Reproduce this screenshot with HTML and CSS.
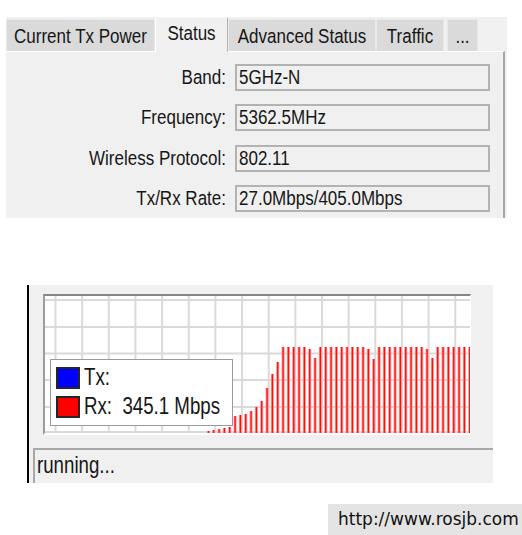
FILE: index.html
```html
<!DOCTYPE html>
<html>
<head>
<meta charset="utf-8">
<link rel="stylesheet" href="styles.css">
</head>
<body>
<div class="page">
  <section class="tabctl">
    <div class="tabs">
      <div class="tab w1"><span class="t">Current Tx Power</span></div>
      <div class="tab active w2"><span class="t">Status</span></div>
      <div class="tab w3"><span class="t">Advanced Status</span></div>
      <div class="tab w4"><span class="t">Traffic</span></div>
      <div class="tab w5"><span class="t">...</span></div>
    </div>
    <div class="pane">
      <div class="row"><div class="lbl"><span class="t">Band:</span></div><div class="fld"><span class="t">5GHz-N</span></div></div>
      <div class="row"><div class="lbl"><span class="t">Frequency:</span></div><div class="fld"><span class="t">5362.5MHz</span></div></div>
      <div class="row"><div class="lbl"><span class="t">Wireless Protocol:</span></div><div class="fld"><span class="t">802.11</span></div></div>
      <div class="row"><div class="lbl"><span class="t">Tx/Rx Rate:</span></div><div class="fld"><span class="t">27.0Mbps/405.0Mbps</span></div></div>
    </div>
  </section>

  <section class="graphwin">
    <div class="graph">
      <svg class="chart" width="425" height="137" viewBox="0 0 425 137">
        <path class="grid" d="M10.5 0V137M37.15 0V137M63.8 0V137M90.45 0V137M117.1 0V137M143.75 0V137M170.4 0V137M197.05 0V137M223.7 0V137M250.35 0V137M277 0V137M303.65 0V137M330.3 0V137M356.95 0V137M383.6 0V137M410.25 0V137M0 4H425M0 31H425M0 57.5H425M0 84H425M0 111H425M0 136H425"/>
        <path class="bars-halo" d="M163.4 135V137M168.7 134V137M174.1 133V137M179.4 132V137M184.7 131V137M190.1 120V137M195.4 119V137M200.7 118V137M206.1 115V137M211.4 111V137M216.7 105V137M222.1 92V137M227.4 78V137M232.7 66V137M238.1 51V137M243.4 51V137M248.7 51V137M254.1 51V137M259.4 51V137M264.7 53V137M270.1 62V137M275.4 51V137M280.7 51V137M286.1 51V137M291.4 51V137M296.7 51V137M302.1 51V137M307.4 51V137M312.7 51V137M318.1 51V137M323.4 53V137M328.7 63V137M334.1 51V137M339.4 51V137M344.7 51V137M350.1 51V137M355.4 51V137M360.7 51V137M366.1 51V137M371.4 51V137M376.7 51V137M382.1 53V137M387.4 62V137M392.7 51V137M398.1 51V137M403.4 51V137M408.7 51V137M414.1 51V137M419.4 51V137M424.7 51V137"/>
        <path class="bars" d="M163.4 135V137M168.7 134V137M174.1 133V137M179.4 132V137M184.7 131V137M190.1 120V137M195.4 119V137M200.7 118V137M206.1 115V137M211.4 111V137M216.7 105V137M222.1 92V137M227.4 78V137M232.7 66V137M238.1 51V137M243.4 51V137M248.7 51V137M254.1 51V137M259.4 51V137M264.7 53V137M270.1 62V137M275.4 51V137M280.7 51V137M286.1 51V137M291.4 51V137M296.7 51V137M302.1 51V137M307.4 51V137M312.7 51V137M318.1 51V137M323.4 53V137M328.7 63V137M334.1 51V137M339.4 51V137M344.7 51V137M350.1 51V137M355.4 51V137M360.7 51V137M366.1 51V137M371.4 51V137M376.7 51V137M382.1 53V137M387.4 62V137M392.7 51V137M398.1 51V137M403.4 51V137M408.7 51V137M414.1 51V137M419.4 51V137M424.7 51V137"/>
      </svg>
      <div class="legend">
        <div class="li"><span class="sw blue"></span><span class="t">Tx:</span></div>
        <div class="li"><span class="sw red"></span><span class="t">Rx:  345.1 Mbps</span></div>
      </div>
    </div>
    <div class="statusbar"><span class="t">running...</span></div>
  </section>

  <div class="wm">http://www.rosjb.com</div>
</div>
</body>
</html>
```

FILE: styles.css
```css
* { box-sizing: border-box; }

body {
  margin: 0;
  background: #ffffff;
  font-family: "Liberation Sans", Arial, sans-serif;
  color: #161616;
}

.page {
  width: 522px;
  height: 535px;
  overflow: hidden;
}

.t {
  display: inline-block;
  white-space: pre;
  transform: scaleY(1.24);
}

/* ---------- tab control ---------- */
.tabctl {
  margin: 17px 0 0 6px;
  width: 501px;
  height: 201px;
  background: #f0f0f0;
  display: flex;
  flex-direction: column;
}

.tabs {
  display: flex;
  align-items: flex-end;
  height: 34px;
  font-size: 17px;
}

.tab {
  height: 32px;
  background: #dadada;
  border: 1px solid #e9e9e9;
  border-bottom: none;
  display: flex;
  align-items: center;
  justify-content: center;
  padding-top: 2px;
  line-height: 1;
}

.tab.active {
  position: relative;
  z-index: 1;
  height: 35px;
  margin-bottom: -1px;
  background: #f0f0f0;
  border-left: 1px solid #ffffff;
  border-top: 1px solid #f6f6f6;
  border-right: 1px solid #b4b4b4;
  padding-top: 0;
  padding-bottom: 4px;
}

.w1 { width: 149px; }
.w2 { width: 73px; }
.w3 { width: 148px; }
.w4 { width: 68px; }
.w5 { width: 31px; margin-left: 3px; }

.pane {
  flex: 1;
  width: 499px;
  border-top: 1px solid #ffffff;
  border-right: 2px solid #a6a6a6;
  padding-top: 12px;
  display: flex;
  flex-direction: column;
  gap: 13.3px;
}

.row {
  display: flex;
  align-items: center;
  height: 27px;
  font-size: 17px;
  line-height: 1;
}

.lbl {
  width: 220px;
  text-align: right;
}

.fld {
  margin-left: 9px;
  width: 255px;
  height: 27px;
  border: 2px solid #b3b3b3;
  display: flex;
  align-items: center;
  padding-left: 2px;
}

/* ---------- graph window ---------- */
.graphwin {
  margin: 67px 0 0 27px;
  width: 466px;
  height: 198px;
  background: #f0f0f0;
  border-left: 2px solid #000000;
  padding: 9px 0 0 14px;
  display: flex;
  flex-direction: column;
}

.graph {
  position: relative;
  width: 428px;
  height: 141px;
  background: #ffffff;
  border-top: 2px solid #858585;
  border-left: 2px solid #9c9c9c;
  border-right: 1px solid #ffffff;
  border-bottom: 2px solid #ffffff;
}

.chart { display: block; }

.grid {
  fill: none;
  stroke: #dadada;
  stroke-width: 2;
}

.bars-halo {
  fill: none;
  stroke: #ff9494;
  stroke-width: 3;
}

.bars {
  fill: none;
  stroke: #ff1010;
  stroke-width: 1.3;
}

.legend {
  position: absolute;
  left: 5px;
  top: 63px;
  width: 183px;
  height: 67px;
  background: #ffffff;
  border: 1px solid #9a9a9a;
  padding: 7px 0 0 5px;
  display: flex;
  flex-direction: column;
  gap: 7px;
  font-size: 18.7px;
  line-height: 1;
}

.li {
  display: flex;
  align-items: center;
  height: 22px;
}

.li .t { margin-left: 4px; }

.sw {
  width: 24px;
  height: 22px;
  border: 2px solid #262626;
}

.sw.blue { background: #0000ff; }
.sw.red { background: #ff0000; }

.statusbar {
  margin: 13px 0 0 -10px;
  width: 460px;
  height: 35px;
  border-top: 2px solid #a8a8a8;
  border-left: 2px solid #a8a8a8;
  padding-left: 2px;
  display: flex;
  align-items: center;
  font-size: 18.7px;
  line-height: 1;
}

/* ---------- watermark ---------- */
.wm {
  margin: 21px 0 0 328px;
  width: 194px;
  height: 31px;
  background: #e4e4e4;
  padding-left: 10px;
  font-family: "DejaVu Sans", Verdana, sans-serif;
  font-size: 17px;
  line-height: 31px;
  color: #111111;
  white-space: nowrap;
}
```
